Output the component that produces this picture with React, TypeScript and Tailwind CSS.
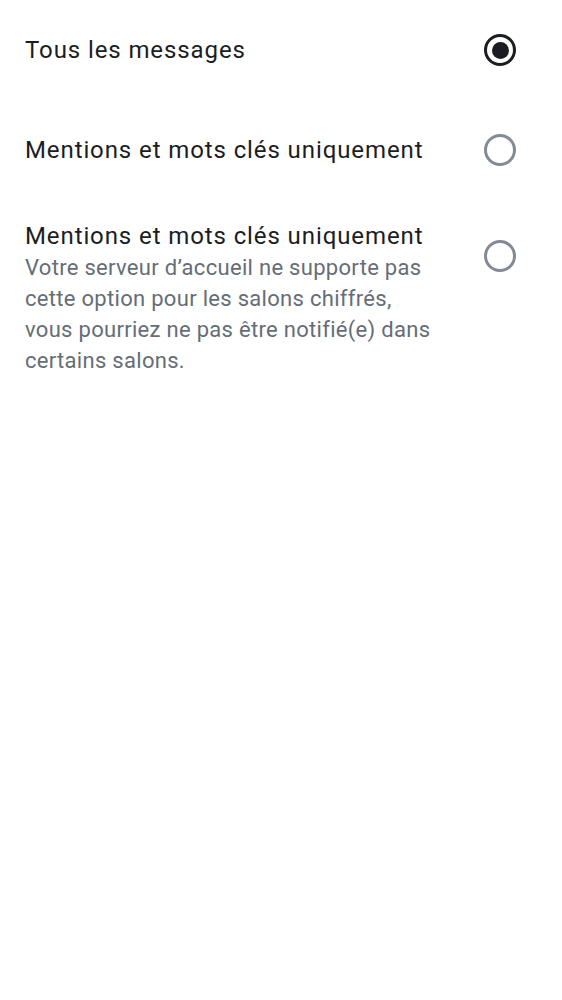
import React from "react";

function Radio({ checked }: { checked: boolean }) {
  return checked ? (
    <div className="w-[32px] h-[32px] rounded-full border-[3px] border-[#1b1d22] flex items-center justify-center shrink-0">
      <div className="w-[17px] h-[17px] rounded-full bg-[#1b1d22]" />
    </div>
  ) : (
    <div className="w-[32px] h-[32px] rounded-full border-[3px] border-[#818a95] shrink-0" />
  );
}

export default function App() {
  return (
    <div className="bg-white min-h-[1000px] w-full" style={{ fontFamily: "Roboto, sans-serif" }}>
      <div className="flex items-center justify-between pl-[25px] pr-[46px] h-[100px]">
        <span className="text-[24px] text-[#1b1d22] tracking-[0.9px]">Tous les messages</span>
        <Radio checked />
      </div>
      <div className="flex items-center justify-between pl-[25px] pr-[46px] h-[100px]">
        <span className="text-[24px] text-[#1b1d22] tracking-[0.9px]">Mentions et mots clés uniquement</span>
        <Radio checked={false} />
      </div>
      <div className="flex items-start justify-between pl-[25px] pr-[46px] pt-[20px]">
        <div className="flex flex-col w-[410px]">
          <span className="text-[24px] leading-[32px] text-[#1b1d22] tracking-[0.9px] whitespace-nowrap">Mentions et mots clés uniquement</span>
          <span className="text-[22px] leading-[31px] text-[#656d77] tracking-[0.3px]">
            Votre serveur d’accueil ne supporte pas cette option pour les salons chiffrés, vous pourriez ne pas être notifié(e) dans certains salons.
          </span>
        </div>
        <div className="mt-[20px]">
          <Radio checked={false} />
        </div>
      </div>
    </div>
  );
}
